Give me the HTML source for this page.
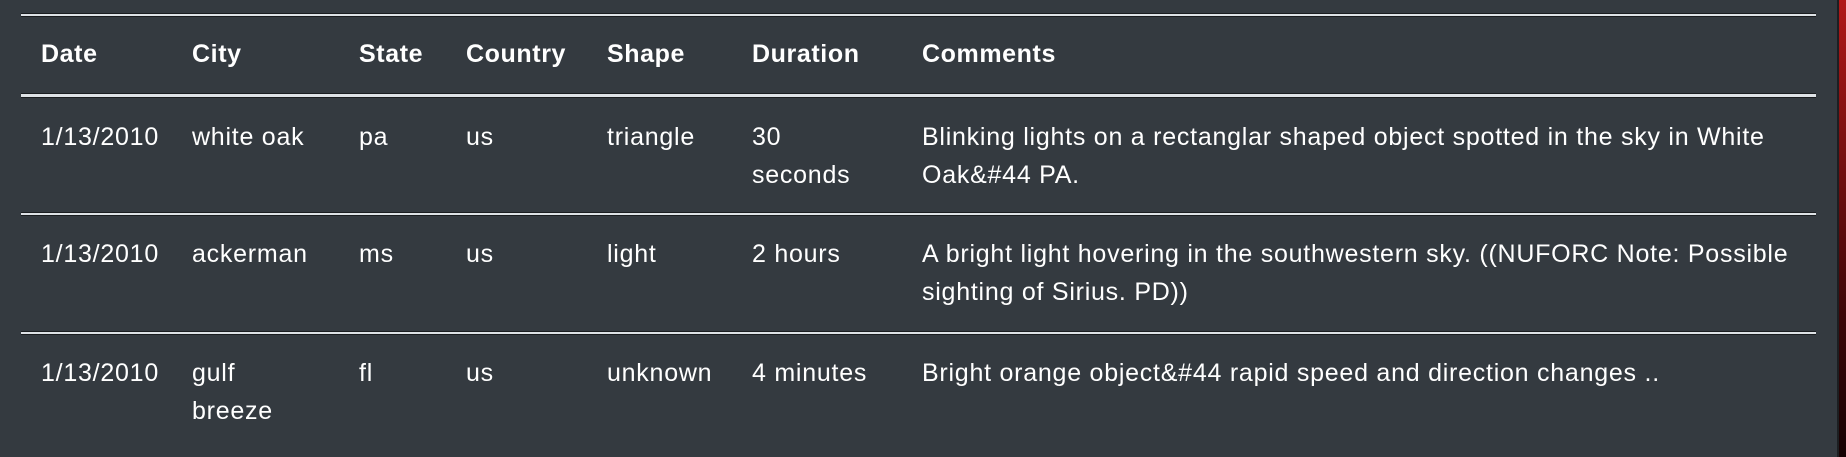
<!DOCTYPE html>
<html><head><meta charset="utf-8"><style>
body{margin:0;width:1846px;height:457px;background:#343a40;overflow:hidden;position:relative;font-family:"Liberation Sans",Arial,sans-serif;color:#fff;font-size:25px;letter-spacing:0.75px;}
.r{position:absolute;right:0;top:0;width:7px;height:457px;background:linear-gradient(#b01818,#3a0608 70%,#150203);}
.rl{position:absolute;right:7px;top:0;width:2px;height:457px;background:#1c1f22;}
.ln{position:absolute;left:21px;width:1795px;height:2px;background:#dee2e6;box-shadow:0 -1px 0 #1a1d20,0 1px 0 #1a1d20;}
.t{position:absolute;white-space:nowrap;line-height:38px;}
.h{font-weight:bold;letter-spacing:0.6px;}
</style></head><body>
<div class="rl"></div><div class="r"></div>
<div class="ln" style="top:14px;height:1.5px"></div>
<div class="ln" style="top:94px;height:2.5px"></div>
<div class="ln" style="top:213px"></div>
<div class="ln" style="top:332px"></div>

<div class="t h" style="left:41px;top:35px">Date</div>
<div class="t h" style="left:192px;top:35px">City</div>
<div class="t h" style="left:359px;top:35px">State</div>
<div class="t h" style="left:466px;top:35px">Country</div>
<div class="t h" style="left:607px;top:35px">Shape</div>
<div class="t h" style="left:752px;top:35px">Duration</div>
<div class="t h" style="left:922px;top:35px">Comments</div>

<div class="t" style="left:41px;top:118px">1/13/2010</div>
<div class="t" style="left:192px;top:118px">white oak</div>
<div class="t" style="left:359px;top:118px">pa</div>
<div class="t" style="left:466px;top:118px">us</div>
<div class="t" style="left:607px;top:118px">triangle</div>
<div class="t" style="left:752px;top:118px">30<br>seconds</div>
<div class="t" style="left:922px;top:118px">Blinking lights on a rectanglar shaped object spotted in the sky in White<br>Oak&amp;#44 PA.</div>

<div class="t" style="left:41px;top:235px">1/13/2010</div>
<div class="t" style="left:192px;top:235px">ackerman</div>
<div class="t" style="left:359px;top:235px">ms</div>
<div class="t" style="left:466px;top:235px">us</div>
<div class="t" style="left:607px;top:235px">light</div>
<div class="t" style="left:752px;top:235px">2 hours</div>
<div class="t" style="left:922px;top:235px">A bright light hovering in the southwestern sky. ((NUFORC Note: Possible<br>sighting of Sirius. PD))</div>

<div class="t" style="left:41px;top:354px">1/13/2010</div>
<div class="t" style="left:192px;top:354px">gulf<br>breeze</div>
<div class="t" style="left:359px;top:354px">fl</div>
<div class="t" style="left:466px;top:354px">us</div>
<div class="t" style="left:607px;top:354px">unknown</div>
<div class="t" style="left:752px;top:354px">4 minutes</div>
<div class="t" style="left:922px;top:354px">Bright orange object&amp;#44 rapid speed and direction changes ..</div>
</body></html>
